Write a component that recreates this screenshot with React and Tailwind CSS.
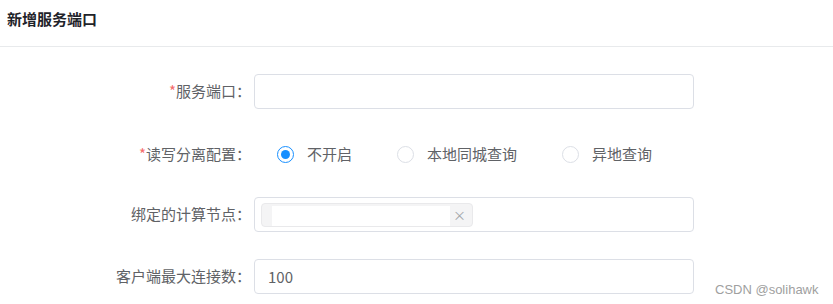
import React, { useState } from "react";

const cjk = "font-['Noto_Sans_CJK_SC','Noto_Sans',sans-serif]";

const Label = ({ required, children }) => (
    <div className="w-[251px] shrink-0 text-right text-[15px] text-[#606266]">
        {required && <span className="text-[#f56c6c]">*</span>}
        {children}：
    </div>
);

const Radio = ({ checked, label, onClick }) => (
    <div onClick={onClick} className="flex items-center cursor-pointer mr-[45px]">
        {checked ? (
            <span className="w-[17px] h-[17px] rounded-full border border-[#1890ff] flex items-center justify-center">
                <span className="w-[9px] h-[9px] rounded-full bg-[#1890ff]"></span>
            </span>
        ) : (
            <span className="w-[17px] h-[17px] rounded-full border border-[#dcdfe6] bg-white"></span>
        )}
        <span className="ml-[13px] text-[15px] text-[#606266]">{label}</span>
    </div>
);

export default function App() {
    let [mode, setmode] = useState(0)
    let [port, setport] = useState('')
    let [conn, setconn] = useState('100')

    return (
        <div className={`relative w-[833px] h-[304px] bg-white overflow-hidden ${cjk}`}>
            <div className="h-[47px] border-b border-[#e8eaec] pl-[7px] pt-[6px]">
                <span className="text-[15px] font-bold text-[#1f2329]">新增服务端口</span>
            </div>

            <div className="flex flex-col gap-[27px] pt-[27px]">
                <div className="flex items-center h-[35px]">
                    <Label required>服务端口</Label>
                    <input
                        value={port}
                        onChange={(e) => setport(e.target.value)}
                        className="ml-[3px] w-[440px] h-[35px] border border-[#dcdfe6] rounded-[4px] px-[13px] text-[15px] text-[#606266] outline-none"
                    />
                </div>

                <div className="flex items-center h-[35px] mt-[1px]">
                    <Label required>读写分离配置</Label>
                    <div className="ml-[26px] flex items-center">
                        <Radio checked={mode === 0} label="不开启" onClick={() => setmode(0)} />
                        <Radio checked={mode === 1} label="本地同城查询" onClick={() => setmode(1)} />
                        <Radio checked={mode === 2} label="异地查询" onClick={() => setmode(2)} />
                    </div>
                </div>

                <div className="flex items-center h-[35px] -mt-[2px]">
                    <Label>绑定的计算节点</Label>
                    <div className="ml-[3px] w-[440px] h-[35px] border border-[#dcdfe6] rounded-[4px] flex items-center px-[6px]">
                        <div className="w-[212px] h-[24px] bg-[#f4f4f5] border border-[#e9e9eb] rounded-[4px] flex items-center pl-[10px] pr-[6px]">
                            <span className="w-[178px] h-[20px] mt-[3px] bg-white"></span>
                            <span className="ml-auto text-[13px] leading-none text-[#a0a3a8]">×</span>
                        </div>
                    </div>
                </div>

                <div className="flex items-center h-[35px]">
                    <Label>客户端最大连接数</Label>
                    <input
                        value={conn}
                        onChange={(e) => setconn(e.target.value)}
                        className="ml-[3px] w-[440px] h-[35px] border border-[#dcdfe6] rounded-[4px] px-[13px] text-[15px] text-[#606266] outline-none"
                    />
                </div>
            </div>

            <div className="absolute left-[715px] top-[283px] text-[13px] leading-none text-[#a0a0a0] font-['Liberation_Sans',sans-serif]">
                CSDN @solihawk
            </div>
        </div>
    )
}
